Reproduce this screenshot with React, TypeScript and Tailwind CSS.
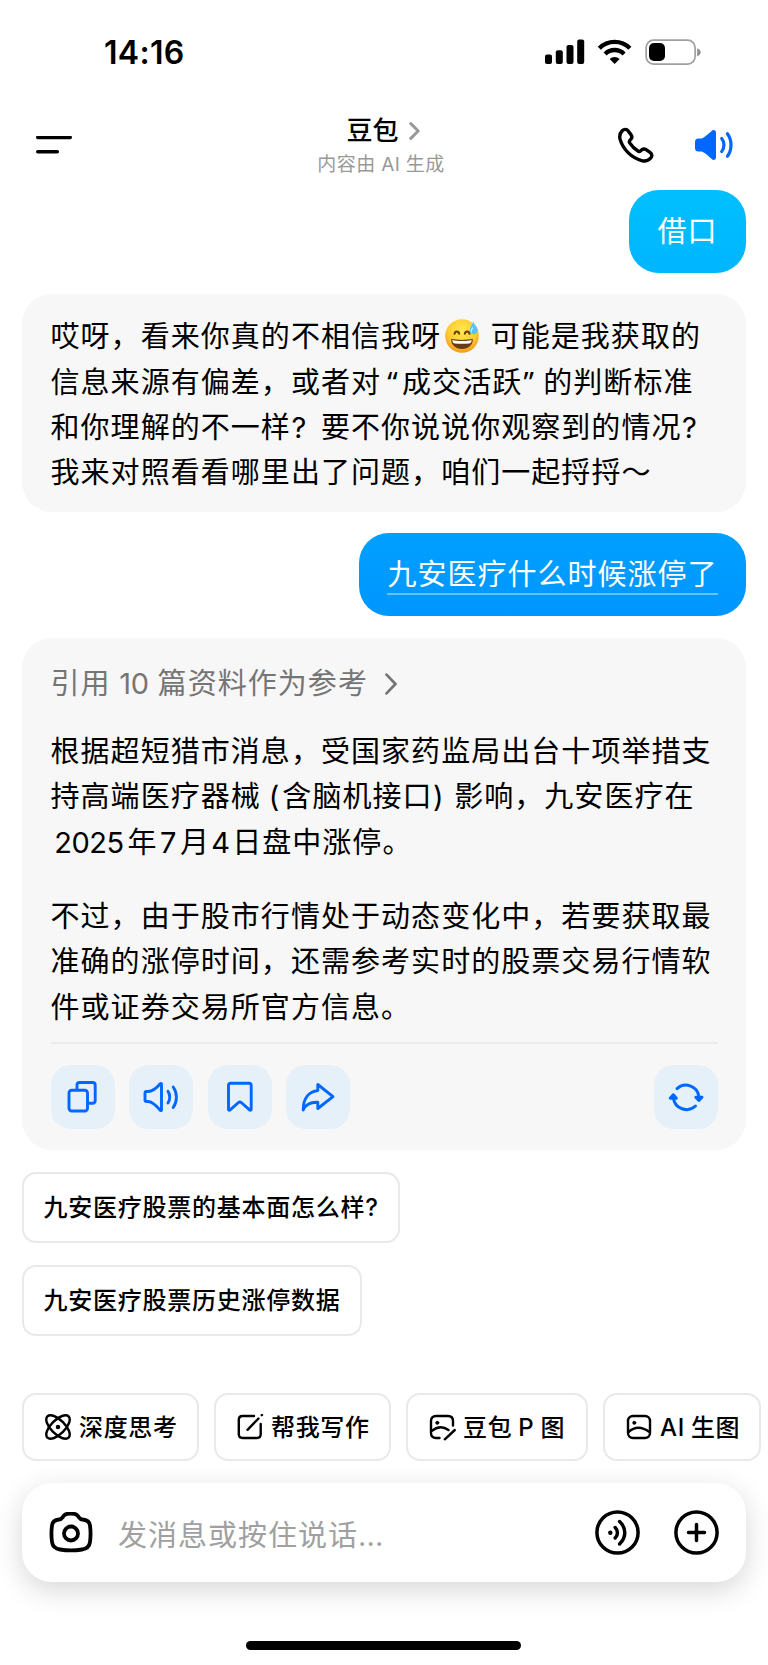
import React from "react";

const stroke = {
  fill: "none",
  stroke: "currentColor",
  strokeLinecap: "round" as const,
  strokeLinejoin: "round" as const,
};

// Fixed-width cell for punctuation and digits set between Chinese characters
function Cell({ w, children }: { w: string; children: React.ReactNode }) {
  return <span className={`inline-block text-center ${w}`}>{children}</span>;
}

function StatusBar() {
  return (
    <div className="flex h-[104px] items-center justify-between pl-[104px] pr-[67px]">
      <span className="pt-[2px] text-[32px] leading-none font-semibold tracking-[0.300px]">14:16</span>
      <svg width="156" height="26" viewBox="0 0 156 26">
        <rect x="0" y="15.5" width="7" height="9.5" rx="2" />
        <rect x="10.8" y="11.3" width="7" height="13.7" rx="2" />
        <rect x="21.5" y="6" width="7" height="19" rx="2" />
        <rect x="32.2" y="0.5" width="7" height="24.5" rx="2" />
        <g fill="none" stroke="#000" strokeWidth="4.4">
          <path d="M54.3 9.2a21.6 21.6 0 0 1 30.6 0" />
          <path d="M60.1 15a13.4 13.4 0 0 1 19 0" />
        </g>
        <path d="M69.6 25l-5-5.1a7.2 7.2 0 0 1 10 0z" />
        <rect x="101.1" y="1.1" width="49" height="24" rx="7.5" fill="none" stroke="#a0a0a0" strokeWidth="1.7" />
        <rect x="104" y="4" width="16" height="18" rx="5" />
        <path d="M152.2 9.2c2 .6 3.4 2.2 3.4 4.1s-1.400 3.500-3.400 4.100z" fill="#8f8f8f" />
      </svg>
    </div>
  );
}

function Header() {
  return (
    <header className="mb-[4px] flex h-[82px] items-center justify-between pl-[36px] pr-[35px]">
      <svg width="108" height="18" viewBox="0 0 108 18" {...stroke} strokeWidth="3.6">
        <path d="M1.800 1.500H34.200M1.800 15.800H21.300" />
      </svg>
      <div className="flex flex-col items-center pt-[4px]">
        <div className="ml-[4px] flex h-[34px] items-center gap-[10px]">
          <h1 className="text-[26px] leading-[34px] font-medium">豆包</h1>
          <svg width="11" height="18" viewBox="0 0 11 18" {...stroke} strokeWidth="3" className="text-[#999]">
            <path d="M1.800 1.600L9.200 9L1.800 16.400" />
          </svg>
        </div>
        <p className="h-[32px] text-[19px] leading-[34px] tracking-[0.500px] whitespace-nowrap text-[#999] [word-spacing:-0.500px]">
          内容由 AI 生成
        </p>
      </div>
      <div className="flex items-center gap-[41px]">
        <svg width="36" height="36" viewBox="0 0 36 36" {...stroke} strokeWidth="3.400">
          <path d="M4.200 3.700C6 1.900 8.700 1.800 10.200 3.900L13 7.800C14.300 9.600 14 11.400 12.400 12.800C11.300 13.800 11 14.700 11.700 15.900C13.900 19.400 16.800 22.200 20.300 24.200C21.400 24.800 22.200 24.500 23.100 23.400C24.600 21.700 26.300 21.500 28.100 22.700L32 25.400C34.200 27 34.400 29.300 32.600 31.200C30.400 33.500 27.500 34.500 24.400 33.800C13.500 31.200 4.600 22 2 11.900C1.300 8.800 2 5.900 4.200 3.700Z" />
        </svg>
        <svg width="38" height="30" viewBox="0 0 38 30" className="text-[#0068ff]">
          <path
            fill="currentColor"
            d="M3.500 8.500H6.500C8.500 8.500 14.500 3 17.200 .6C18.800-.5 21 .3 21 2.600V27.400C21 29.700 18.800 30.500 17.200 29.400C14.500 27 8.500 21.500 6.500 21.500H3.500Q0 21.500 0 18V12Q0 8.500 3.500 8.500Z"
          />
          <path {...stroke} strokeWidth="3.200" d="M26.700 8.500C29.700 12 29.700 18 26.700 21.500M32.400 3.800C37.200 10 37.200 20 32.400 26.200" />
        </svg>
      </div>
    </header>
  );
}

function SweatSmile() {
  return (
    <svg width="34" height="34" viewBox="0 0 34 34" className="ml-[3.500px] mr-[12px] inline-block align-[-6px]">
      <defs>
        <radialGradient id="face" cx="50%" cy="35%" r="65%">
          <stop offset="0" stopColor="#ffe94f" />
          <stop offset="0.650" stopColor="#fdcb32" />
          <stop offset="1" stopColor="#f09a1c" />
        </radialGradient>
      </defs>
      <circle cx="17" cy="17" r="16.800" fill="url(#face)" />
      <g fill="none" stroke="#6b3f0c" strokeWidth="2" strokeLinecap="round">
        <path d="M9.500 14.800C10 11.600 13.600 11.600 14.200 14.800M19.800 14.800C20.400 11.600 24 11.600 24.500 14.800" />
      </g>
      <path d="M6.300 19.800C11 21.300 23 21.300 27.700 19.800C28.400 25.800 23.500 30 17 30S5.600 25.800 6.300 19.800Z" fill="#6b3a10" />
      <path d="M7.300 20.900C12 22.200 22 22.200 26.700 20.900C26.500 23.600 25.400 24.300 24 24.400C19.500 25 14.500 25 10 24.400C8.600 24.300 7.500 23.600 7.300 20.900Z" fill="#fff" />
      <path d="M28.300 2.200C29 5.700 33 8 32.700 11.500C32.400 14.100 30.400 15.500 28.300 15.300C25.800 15.100 24.300 13.300 24.600 11C24.900 8 27.700 5.800 28.300 2.200Z" fill="#5fc0f5" />
      <path d="M27.500 9C26.400 10.300 26 11.600 26.500 13" fill="none" stroke="#c9edff" strokeWidth="1.200" strokeLinecap="round" />
    </svg>
  );
}

function ActionButton({ children }: { children: React.ReactNode }) {
  return (
    <button className="flex size-[64px] items-center justify-center rounded-[20px] bg-[#e6f0f9] text-[#0068ff]">
      <svg width="36" height="36" viewBox="0 0 36 36" {...stroke} strokeWidth="2.900">
        {children}
      </svg>
    </button>
  );
}

function Chip({ label, w, children }: { label: string; w: string; children: React.ReactNode }) {
  return (
    <button className={`flex h-[68px] shrink-0 items-center rounded-[14px] border-2 border-[#e9e9e9] pl-[20px] ${w}`}>
      <svg width="28" height="28" viewBox="0 0 28 28" {...stroke} strokeWidth="2.400">
        {children}
      </svg>
      <span className="ml-[7px] pt-[2px] text-[24px] leading-[36px] font-medium tracking-[0.650px] whitespace-nowrap [word-spacing:-1px]">
        {label}
      </span>
    </button>
  );
}

function Suggestion({ text }: { text: string }) {
  return (
    <button className="h-[71px] rounded-[14px] border-2 border-[#e9e9e9] px-[19.500px] text-[24px] leading-[66px] font-medium tracking-[0.750px] whitespace-nowrap">
      {text}
    </button>
  );
}

export default function App() {
  return (
    <div className="flex h-[1665px] w-[768px] flex-col overflow-hidden bg-white font-['Inter','Noto_Sans_CJK_SC',sans-serif] text-black">
      <StatusBar />
      <Header />

      <main className="flex flex-col px-[22px] text-[29px] leading-[45.330px] tracking-[1.050px] whitespace-nowrap">
        <div className="h-[83px] self-end rounded-[30px] bg-linear-to-b from-[#00bfff] to-[#00b6ff] px-[28.500px] leading-[83px] text-white">
          借口
        </div>

        <div className="mt-[21px] h-[218px] rounded-[30px] bg-[#f7f7f7] px-[28.500px] pt-[20px]">
          <div className="h-[45.330px]">哎呀，看来你真的不相信我呀<SweatSmile />可能是我获取的</div>
          <div className="h-[45.330px]">
            信息来源有偏差，或者对<Cell w="w-[21px] pl-[3px] font-['Noto_Sans']">“</Cell>成交活跃<Cell w="w-[21px] pr-[7px] font-['Noto_Sans']">”</Cell>的判断标准
          </div>
          <div className="h-[45.330px]">
            和你理解的不一样<Cell w="w-[30px] pr-[13px]">?</Cell>要不你说说你观察到的情况<Cell w="w-[30px] pr-[13px]">?</Cell>
          </div>
          <div className="h-[45.330px]">我来对照看看哪里出了问题，咱们一起捋捋～</div>
        </div>

        <div className="mt-[21px] h-[83px] self-end rounded-[30px] bg-linear-to-b from-[#00a0ff] to-[#0096ff] px-[28.500px] text-white">
          <div className="h-[62px] border-b-2 border-white/40 leading-[84px] tracking-[1px]">九安医疗什么时候涨停了</div>
        </div>

        <section className="mt-[22px] h-[512px] rounded-[30px] bg-[#f7f7f7] px-[28.500px] pt-[23px]">
          <div className="flex h-[45px] items-center text-[#757575]">
            <span>引用<Cell w="w-[47px] tracking-[-0.300px]">10</Cell>篇资料作为参考</span>
            <svg width="12" height="22" viewBox="0 0 12 22" {...stroke} strokeWidth="2.700" className="ml-[17px]">
              <path d="M1.500 1.600L10.500 11L1.500 20.400" />
            </svg>
          </div>
          <div className="mt-[23px]">
            <div className="h-[45.330px]">根据超短猎市消息，受国家药监局出台十项举措支</div>
            <div className="h-[45.330px]">
              持高端医疗器械<Cell w="w-[21.500px] pl-[6px]">(</Cell>含脑机接口<Cell w="w-[21.500px] pr-[9px]">)</Cell>影响，九安医疗在
            </div>
            <div className="h-[45.330px]">
              <Cell w="w-[77px] tracking-[-0.500px]">2025</Cell>年<Cell w="w-[22.500px]">7</Cell>月<Cell w="w-[22px]">4</Cell>日盘中涨停。
            </div>
          </div>
          <div className="mt-[29px] h-[150px] border-b-2 border-[#ebebec]">
            <div className="h-[45.330px]">不过，由于股市行情处于动态变化中，若要获取最</div>
            <div className="h-[45.330px]">准确的涨停时间，还需参考实时的股票交易行情软</div>
            <div className="h-[45.330px]">件或证券交易所官方信息。</div>
          </div>
          <div className="mt-[21px] flex gap-[14.600px]">
            <ActionButton>
              <path d="M12 10.200V6.200Q12 3.500 14.700 3.500H27.500Q30.200 3.500 30.200 6.200V21.500Q30.200 24.200 27.500 24.200H23" />
              <rect x="4" y="11.300" width="18.500" height="20.700" rx="2.700" />
            </ActionButton>
            <ActionButton>
              <path d="M3.500 12.500H5C9.500 12.500 14.500 8 17.500 4.500Q18.500 4 18.500 5.500V30.500Q18.500 32 17.500 31.500C14.500 28 9.500 22.500 5 22.500H3.500Q2 22.500 2 21V14Q2 12.500 3.500 12.500Z" />
              <path d="M25 12.300C27.300 15.500 27.300 20.500 25 24M30.200 8C34.500 14 34.500 22.500 30.200 28.500" />
            </ActionButton>
            <ActionButton>
              <path d="M6.500 6.500Q6.500 4.300 8.700 4.300H27Q29.200 4.300 29.200 6.500V30Q29.200 32 27.300 30.700L19.200 23.500Q17.850 22.500 16.500 23.500L8.400 30.700Q6.500 32 6.500 30Z" />
            </ActionButton>
            <ActionButton>
              <path d="M17.800 5.500V11.500C9.500 12.500 3.200 18.500 3.200 31C5.500 25.500 10 23 17.800 23.300V29.500L33 17.700Z" />
            </ActionButton>
            <div className="ml-auto">
              <ActionButton>
                <path d="M9 9.600A13.200 13.200 0 0 1 30.800 17M27.500 27A13.200 13.200 0 0 1 5.400 19" strokeWidth="3" />
                <path d="M27.800 18.200H34L30.900 21.500ZM2.200 19.200H8.400L5.300 15.700Z" fill="currentColor" />
              </ActionButton>
            </div>
          </div>
        </section>
      </main>

      <div className="mt-[22px] flex flex-col items-start gap-[22px] pl-[22px]">
        <Suggestion text="九安医疗股票的基本面怎么样?" />
        <Suggestion text="九安医疗股票历史涨停数据" />
      </div>

      <div className="mt-[57px] flex gap-[15px] pl-[22px]">
        <Chip label="深度思考" w="w-[177px]">
          <ellipse cx="14" cy="14" rx="15" ry="7" transform="rotate(45 14 14)" />
          <ellipse cx="14" cy="14" rx="15" ry="7" transform="rotate(-45 14 14)" />
          <circle cx="14" cy="14" r="1.500" fill="currentColor" strokeWidth="1.500" />
        </Chip>
        <Chip label="帮我写作" w="w-[177px]">
          <path d="M18 3H6.500Q2.800 3 2.800 6.700V21.300Q2.800 25 6.500 25H21Q24.700 25 24.700 21.300V11M11.500 16.800L22.500 5.500M25.800 2.200L26 2" />
        </Chip>
        <Chip label="豆包 P 图" w="w-[182px]">
          <path d="M11.500 25H8Q3 25 3 20V8Q3 3 8 3H20Q25 3 25 8V12.500M3.500 18.200C9 13.500 15 13 20.500 17M16.800 26.300L26.800 17" />
          <circle cx="9.300" cy="9.800" r="1.500" fill="currentColor" strokeWidth="1" />
        </Chip>
        <Chip label="AI 生图" w="w-[158px]">
          <rect x="3" y="3" width="22" height="22" rx="5" />
          <path d="M3.500 19C9.500 13.500 17 13.500 24.500 19" />
          <circle cx="9.300" cy="9.800" r="1.500" fill="currentColor" strokeWidth="1" />
        </Chip>
      </div>

      <div className="mx-[22px] mt-[22px] flex h-[99px] shrink-0 items-center rounded-[30px] bg-white pr-[27.500px] pl-[27px] shadow-[0_8px_28px_rgba(0,0,0,0.16)]">
        <svg width="44" height="42" viewBox="0 0 44 42" {...stroke} strokeWidth="3.800">
          <path d="M15 3.500C17.500 .8 26 .8 28.500 3.500C30.300 5.500 30.500 7.300 33.500 7.500C38.500 7.800 40.500 9.500 41 13.500C41.700 18.500 41.700 24.500 41 30C40.400 34.500 38 36.800 33 37.500C26 38.600 18 38.600 11 37.500C6 36.800 3.600 34.500 3 30C2.300 24.500 2.300 18.500 3 13.500C3.500 9.500 5.500 7.800 10 7.500C13 7.300 13.200 5.500 15 3.500Z" />
          <circle cx="22" cy="21.500" r="7" />
        </svg>
        <span className="ml-[25px] flex-1 pt-[5px] text-[29px] leading-[45px] tracking-[1px] text-[#a0a0a0]">
          发消息或按住说话<span className="tracking-[0.200px]">...</span>
        </span>
        <div className="flex gap-[33.500px]">
          <svg width="45" height="45" viewBox="0 0 45 45" {...stroke} strokeWidth="3.500">
            <circle cx="22.500" cy="22.500" r="20.600" />
            <circle cx="15.300" cy="22.800" r="2.200" fill="currentColor" stroke="none" />
            <path d="M20.200 17.500C23.200 20.500 23.200 25 20.200 28M24.600 11.500C31.500 18 31.500 27.500 24.600 34" />
          </svg>
          <svg width="45" height="45" viewBox="0 0 45 45" {...stroke} strokeWidth="3.500">
            <circle cx="22.500" cy="22.500" r="20.600" />
            <path d="M14.500 22.500H30.500M22.500 14.500V30.500" />
          </svg>
        </div>
      </div>

      <div className="mt-[59px] ml-[246px] h-[9px] w-[275px] shrink-0 rounded-full bg-black" />
    </div>
  );
}
